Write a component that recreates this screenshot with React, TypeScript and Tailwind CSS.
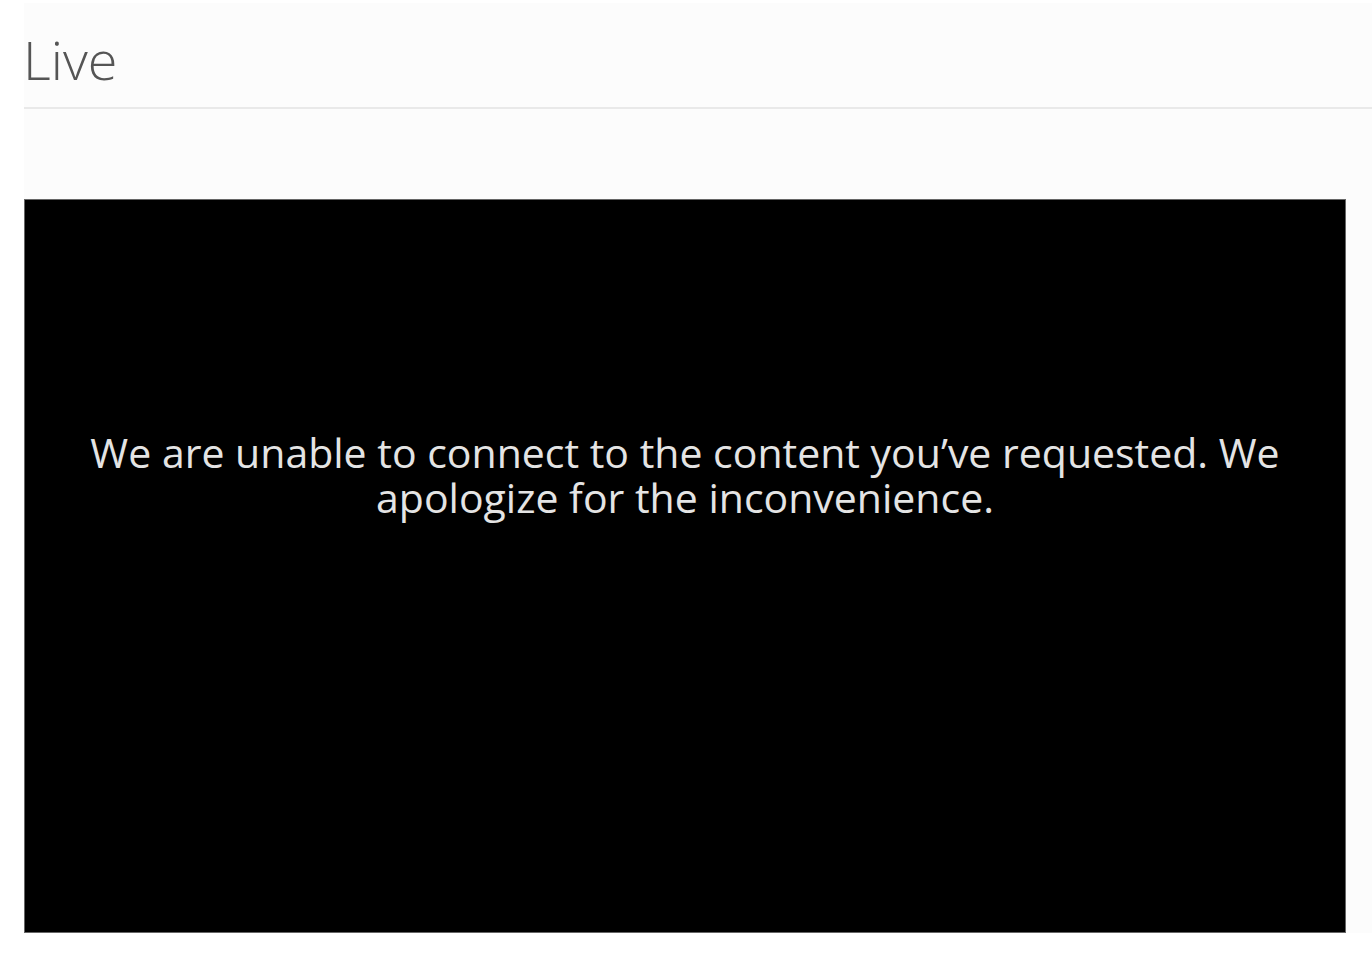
export default function App() {
  return (
    <div className="min-h-screen bg-white pl-[24px] pt-[3px]" style={{ fontFamily: '"Open Sans", sans-serif' }}>
      <div className="bg-[#fcfcfc]">
        <div className="h-[106px] border-b-2 border-[#e9e9e9] flex items-end pb-[21px]">
          <h1 className="text-[54px] leading-none font-light text-[#555] -ml-[1px]">Live</h1>
        </div>
        <div className="pt-[90px] pr-[26px]">
          <div className="h-[734px] bg-black border border-[#666] flex items-center justify-center px-[60px] pb-[182px]">
            <p className="text-center text-[41px] leading-[45px] text-[#e4e4e4]">
              We are unable to connect to the content you’ve requested. We apologize for the inconvenience.
            </p>
          </div>
        </div>
      </div>
    </div>
  )
}
